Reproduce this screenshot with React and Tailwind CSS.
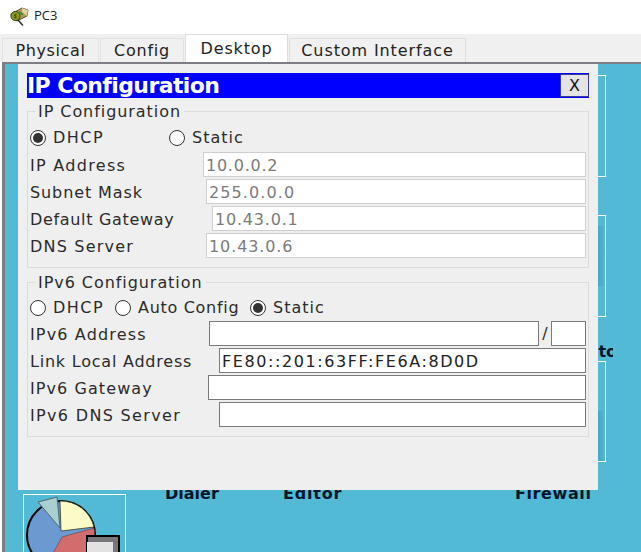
import React from 'react'

const FONT = "font-['DejaVu_Sans',sans-serif]"

function AppIcon() {
  return (
    <svg viewBox="0 0 20 20" className="h-5 w-5" aria-hidden>
      <path d="M2 8l11-6 6 2-1 6-10 5-5-3z" fill="#b39a58" stroke="#3b3320" strokeWidth="0.8" />
      <path d="M13 2l6 2-1 6-5-4z" fill="#e3cf9a" />
      <circle cx="6.5" cy="10" r="4.6" fill="#8c9a1c" stroke="#2c2c14" strokeWidth="0.8" />
      <path d="M5 11.5c2 1 3-1 1.5-1.5S5 8.500 7.500 8.500" fill="none" stroke="#1e2a10" strokeWidth="0.9" />
      <path d="M10 6l4 2.500" stroke="#2f8f3a" strokeWidth="2" />
      <path d="M9.500 14.500l4 4.500" stroke="#33353a" strokeWidth="1.6" strokeLinecap="round" />
    </svg>
  )
}

function PieIcon() {
  return (
    <svg viewBox="0 0 101 57" className="h-[57px] w-[101px]" aria-hidden>
      <circle cx="37" cy="40" r="34" fill="#6c9ad0" stroke="#000" strokeWidth="2" />
      <path d="M38 42L70 33A34 34 0 0 1 50 71H22z" fill="#d36d6d" stroke="#5b2f2f" strokeWidth="0.5" />
      <path d="M36 6A34 34 0 0 1 70 32L37 36z" fill="#fbfbc8" stroke="#3a3a28" strokeWidth="0.8" />
      <path d="M36 33L14 7L33 2z" fill="#a9cfd0" stroke="#50686a" strokeWidth="1" />
      <rect x="63" y="41" width="32" height="30" fill="#77777a" stroke="#000" strokeWidth="2" />
      <rect x="63" y="47" width="26" height="25" fill="#e2e2e2" />
    </svg>
  )
}

function Radio({ checked }) {
  return (
    <span className="flex h-[16px] w-[16px] shrink-0 items-center justify-center rounded-full border border-[#333] bg-white">
      {checked && <span className="h-[10px] w-[10px] rounded-full bg-[#333]" />}
    </span>
  )
}

function RadioLabel({ checked, label, className = '', textClass = '' }) {
  return (
    <label className={`flex items-center gap-[7px] ${className}`}>
      <Radio checked={checked} />
      <span className={textClass}>{label}</span>
    </label>
  )
}

function Field({ label, value, inset, dark, disabled, width, labelClass = '', valueClass = '' }) {
  return (
    <div className="flex h-[25px] items-center">
      <span className={`shrink-0 pl-[2px] pt-[2px] ${labelClass}`} style={{ width: inset }}>{label}</span>
      <div
        className={`flex h-[25px] items-center bg-white pl-[2px] pt-[2px] ${
          dark ? 'border border-[#7a7a7a]' : 'border border-[#cfcfcf]'
        } ${disabled ? 'text-[#7b7b7b]' : 'text-[#222]'} ${width ? '' : 'flex-1'} ${valueClass}`}
        style={width ? { width } : undefined}
      >
        {value}
      </div>
    </div>
  )
}

function GroupBox({ title, children, className = '' }) {
  return (
    <fieldset className={`border border-[#dcdcdc] pr-[2px] ${className}`}>
      <legend className="ml-[7px] px-[3px] pt-[2px] leading-[18px] tracking-[0.94px]">{title}</legend>
      {children}
    </fieldset>
  )
}

function IpDialog() {
  return (
    <div className="absolute left-[13px] top-0 flex h-[426px] w-[580px] flex-col bg-[#efefef] px-[9px] pt-[9px] text-[16px] text-[#2b2b2b]">
      <div className="flex h-[25px] shrink-0 items-center justify-between bg-[#0000ff]">
        <h1 className="text-[22px] font-bold leading-none tracking-[-0.6px] text-white">IP Configuration</h1>
        <button className="flex h-[23px] w-[29px] items-center justify-center border border-[#3a3a9a] bg-[#e4e4e4] text-[16px] text-[#111]">
          X
        </button>
      </div>

      <GroupBox title="IP Configuration" className="mt-[3px] h-[167px]">
        <div className="mt-[3px] flex h-[28px] items-center pl-[2px]">
          <RadioLabel checked label="DHCP" className="w-[139px]" textClass="tracking-[1.5px]" />
          <RadioLabel label="Static" textClass="tracking-[1px]" />
        </div>
        <div className="flex flex-col gap-[2px]">
          <Field label="IP Address" value="10.0.0.2" inset={175} disabled labelClass="tracking-[1.3px]" valueClass="tracking-[0.75px]" />
          <Field label="Subnet Mask" value="255.0.0.0" inset={178} disabled labelClass="tracking-[0.9px]" valueClass="tracking-[1.1px]" />
          <Field label="Default Gateway" value="10.43.0.1" inset={184} disabled labelClass="tracking-[0.67px]" valueClass="tracking-[0.8px]" />
          <Field label="DNS Server" value="10.43.0.6" inset={178} disabled labelClass="tracking-[1.2px]" valueClass="tracking-[0.9px]" />
        </div>
      </GroupBox>

      <GroupBox title="IPv6 Configuration" className="mt-[4px] h-[165px]">
        <div className="mt-[2px] flex h-[27px] items-center gap-[10px] pl-[2px]">
          <RadioLabel label="DHCP" className="w-[75px]" textClass="tracking-[1.5px]" />
          <RadioLabel label="Auto Config" className="w-[125px]" textClass="tracking-[0.7px]" />
          <RadioLabel checked label="Static" textClass="tracking-[1px]" />
        </div>
        <div className="flex flex-col gap-[2px]">
          <div className="flex items-center">
            <Field label="IPv6 Address" inset={181} dark width={330} labelClass="tracking-[1.15px]" />
            <span className="w-[12px] text-center">/</span>
            <div className="h-[25px] flex-1 border border-[#7a7a7a] bg-white" />
          </div>
          <Field label="Link Local Address" value="FE80::201:63FF:FE6A:8D0D" inset={191} dark labelClass="tracking-[0.78px]" valueClass="tracking-[1.58px]" />
          <Field label="IPv6 Gateway" inset={180} dark labelClass="tracking-[1.08px]" />
          <Field label="IPv6 DNS Server" inset={191} dark labelClass="tracking-[1.33px]" />
        </div>
      </GroupBox>
    </div>
  )
}

function DesktopBackground() {
  return (
    <>
      <div className="absolute left-[585px] top-[11px] h-[102px] w-[16px] border border-white" />
      <div className="absolute left-[585px] top-[151px] flex h-[102px] w-[16px] flex-col border border-white pt-[10px]">
        <div className="h-[60px] bg-gradient-to-r from-[#3a8fbe] to-transparent" />
      </div>
      <div className="absolute left-[585px] top-[297px] flex h-[101px] w-[16px] flex-col justify-end border border-white">
        <div className="h-[50px] bg-gradient-to-r from-[#3a8fbe] to-transparent" />
      </div>
      <span className="absolute left-[582px] top-[279px] w-[26px] overflow-hidden text-[16px] font-bold leading-[18px] text-[#07162c]">nto</span>
      <span className="absolute left-[160px] top-[421px] text-[16px] font-bold leading-[18px] text-[#07162c]">Dialer</span>
      <span className="absolute left-[278px] top-[421px] text-[16px] font-bold leading-[18px] tracking-[0.8px] text-[#07162c]">Editor</span>
      <span className="absolute left-[510px] top-[421px] text-[16px] font-bold leading-[18px] tracking-[0.6px] text-[#07162c]">Firewall</span>
      <div className="absolute left-[18px] top-[430px] h-[60px] w-[103px] overflow-hidden border border-b-0 border-white">
        <PieIcon />
      </div>
    </>
  )
}

export default function App() {
  return (
    <div className={`flex h-[552px] w-[641px] flex-col overflow-hidden bg-white ${FONT}`}>
      <header className="flex h-[34px] shrink-0 items-center gap-[5px] pb-[3px] pl-[9px]">
        <AppIcon />
        <span className="font-['Open_Sans',sans-serif] text-[13px] text-[#222]">PC3</span>
      </header>

      <nav className="flex h-[28px] shrink-0 items-end gap-[1px] bg-[#f0f0f0] pl-[2px] text-[16px] text-[#222]">
        <div className="flex h-[24px] w-[97px] items-center justify-center border border-b-0 border-[#e2e2e2] tracking-[0.6px]">Physical</div>
        <div className="flex h-[24px] w-[84px] items-center justify-center border border-b-0 border-[#e2e2e2] tracking-[0.8px]">Config</div>
        <div className="flex h-[28px] w-[103px] items-center justify-center border border-b-0 border-[#dedede] bg-white tracking-[0.85px]">Desktop</div>
        <div className="flex h-[24px] w-[177px] items-center justify-center border border-b-0 border-[#dedede] tracking-[0.9px]">Custom Interface</div>
      </nav>

      <main className="relative ml-[2px] flex-1 border-l-[3px] border-t-2 border-[#7d7d85] bg-[#52bad4]">
        <DesktopBackground />
        <IpDialog />
      </main>
    </div>
  )
}
